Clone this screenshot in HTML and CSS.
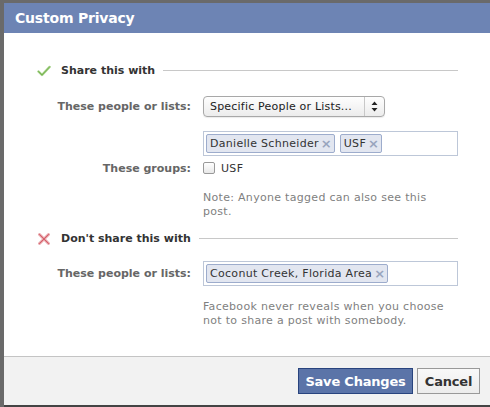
FILE: index.html
```html
<!DOCTYPE html>
<html>
<head>
<meta charset="utf-8">
<link rel="stylesheet" href="styles.css">
</head>
<body>
<div class="dialog">
  <div class="title">Custom Privacy</div>
  <div class="content">
    <div class="section-head">
      <svg class="icon" width="14" height="12" viewBox="0 0 14 12"><path d="M1.5 6.5 L5 10 L12.5 2" fill="none" stroke="#9fce80" stroke-width="2.4" stroke-linejoin="round" stroke-linecap="round"/><path d="M1.5 6.5 L5 10 L12.5 2" fill="none" stroke="#74b04e" stroke-width="0.9" stroke-linejoin="round" stroke-linecap="round"/></svg>
      <span class="head-text">Share this with</span>
      <span class="rule"></span>
    </div>
    <div class="form">
      <div class="label">These people or lists:</div>
      <div class="field">
        <div class="select"><span class="select-text">Specific People or Lists...</span><span class="select-arrows"><svg width="7" height="11" viewBox="0 0 7 11"><path d="M3.5 0.5 L6.5 4 L0.5 4 Z M3.5 10.5 L6.5 7 L0.5 7 Z" fill="#222"/></svg></span></div>
      </div>
      <div class="label"></div>
      <div class="field">
        <div class="tokens"><span class="token">Danielle Schneider<span class="x">×</span></span><span class="token">USF<span class="x">×</span></span></div>
      </div>
      <div class="label group-label">These groups:</div>
      <div class="field check-row"><span class="checkbox"></span><span class="check-label">USF</span></div>
      <div class="label"></div>
      <div class="field note">Note: Anyone tagged can also see this post.</div>
    </div>
    <div class="section-head second">
      <svg class="icon" width="14" height="12" viewBox="0 0 14 12"><path d="M2.5 1.5 L11.5 10.5 M11.5 1.5 L2.5 10.5" fill="none" stroke="#e7a0a6" stroke-width="2.8" stroke-linecap="round"/><path d="M2.5 1.5 L11.5 10.5 M11.5 1.5 L2.5 10.5" fill="none" stroke="#d4606b" stroke-width="1" stroke-linecap="round"/></svg>
      <span class="head-text">Don't share this with</span>
      <span class="rule"></span>
    </div>
    <div class="form form2">
      <div class="label">These people or lists:</div>
      <div class="field">
        <div class="tokens single"><span class="token">Coconut Creek, Florida Area<span class="x">×</span></span></div>
      </div>
      <div class="label"></div>
      <div class="field note note2">Facebook never reveals when you choose not to share a post with somebody.</div>
    </div>
  </div>
  <div class="footer">
    <button class="btn primary">Save Changes</button>
    <button class="btn cancel">Cancel</button>
  </div>
</div>
</body>
</html>
```
FILE: styles.css
```css
html, body {
  margin: 0;
  padding: 0;
}
body {
  width: 490px;
  height: 407px;
  background: #6a6a6a;
  font-family: "DejaVu Sans", "Liberation Sans", sans-serif;
  overflow: hidden;
}
.dialog {
  margin: 3px 0 0 4px;
  width: 486px;
  height: 402px;
  background: #fff;
  display: flex;
  flex-direction: column;
  border-bottom: 2px solid #444;
}
.title {
  height: 30px;
  background: #6d84b4;
  color: #fff;
  font-weight: bold;
  font-size: 14px;
  line-height: 30px;
  padding-left: 11px;
  letter-spacing: -0.2px;
}
.content {
  flex: 1;
  padding: 30px 32px 0 33px;
}
.section-head {
  display: flex;
  align-items: center;
  height: 15px;
}
.section-head.second {
  margin-top: 12px;
}
.icon {
  margin-right: 10px;
  flex: none;
}
.head-text {
  font-weight: bold;
  font-size: 11px;
  color: #333;
}
.rule {
  flex: 1;
  border-top: 1px solid #c8c8c8;
  margin-left: 8px;
}
.form {
  display: grid;
  grid-template-columns: 154px 255px;
  column-gap: 12px;
  row-gap: 0;
  align-items: center;
  font-size: 11px;
  margin-top: 18px;
}
.form2 {
  margin-top: 15px;
}
.label {
  text-align: right;
  font-weight: bold;
  color: #666;
}
.field {
  min-height: 14px;
}
.select {
  display: inline-flex;
  align-items: center;
  height: 19px;
  border: 1px solid #a8a8a8;
  border-radius: 4px;
  background: linear-gradient(#fefefe, #ececec);
  color: #222;
  width: 180px;
  box-shadow: 0 1px 1px rgba(0,0,0,0.08);
}
.select-text {
  flex: 1;
  padding-left: 6px;
  letter-spacing: 0.2px;
}
.select-arrows {
  width: 19px;
  height: 19px;
  border-left: 1px solid #c8c8c8;
  display: flex;
  align-items: center;
  justify-content: center;
}
.tokens {
  margin-top: 14px;
  border: 1px solid #bdc7d8;
  height: 23px;
  display: flex;
  align-items: center;
  padding-left: 2px;
  gap: 5px;
}
.tokens.single {
  margin-top: 0;
}
.token {
  background: #e2e6f0;
  border: 1px solid #9daccc;
  border-radius: 2px;
  color: #333;
  height: 17px;
  line-height: 17px;
  padding: 0 2px 0 3px;
  font-size: 11px;
  letter-spacing: 0.3px;
  display: inline-flex;
  align-items: center;
}
.x {
  color: #98a4bd;
  font-weight: bold;
  margin-left: 2px;
  font-size: 13px;
  letter-spacing: 0;
}
.check-row {
  display: flex;
  align-items: center;
  margin-top: 5px;
  height: 14px;
}
.group-label {
  margin-top: 5px;
}
.checkbox {
  width: 10px;
  height: 10px;
  border: 1px solid #999;
  border-radius: 2px;
  background: linear-gradient(#fff, #e8e8e8);
  margin-right: 6px;
}
.check-label {
  color: #333;
  letter-spacing: 0.3px;
}
.note {
  color: #7f7f7f;
  line-height: 14px;
  margin-top: 16px;
  letter-spacing: 0.3px;
}
.note2 {
  margin-top: 14px;
}
.footer {
  height: 48px;
  border-top: 1px solid #c4c4c4;
  background: #f2f2f2;
  display: flex;
  justify-content: flex-end;
  align-items: center;
  padding-right: 10px;
  gap: 4px;
}
.btn {
  height: 26px;
  font-family: "DejaVu Sans", "Liberation Sans", sans-serif;
  font-weight: bold;
  font-size: 13px;
  letter-spacing: -0.2px;
  white-space: nowrap;
  border: 1px solid #999;
  background: #f4f4f4;
  color: #333;
  padding: 0;
  margin: 0;
}
.btn.primary {
  background: #5b74a8;
  border-color: #29447e;
  color: #fff;
  width: 115px;
}
.btn.cancel {
  width: 63px;
  background: linear-gradient(#f8f8f8, #ececec);
}
```
